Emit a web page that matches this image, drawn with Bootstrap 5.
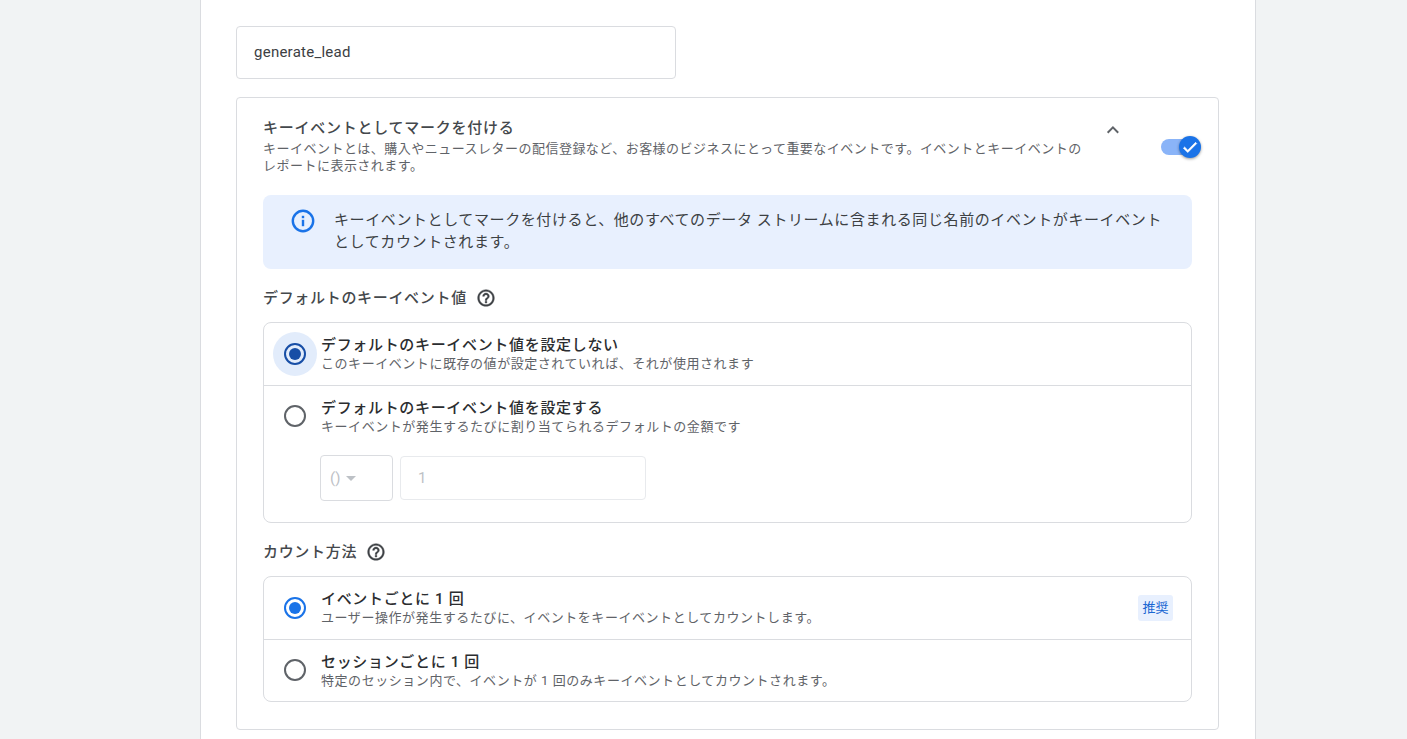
<!DOCTYPE html>
<html lang="ja">
<head>
    <meta charset="UTF-8">
    <meta name="viewport" content="width=device-width, initial-scale=1.0">
    <title>キーイベント</title>
    <link href="https://cdn.jsdelivr.net/npm/bootstrap@5.3.3/dist/css/bootstrap.min.css" rel="stylesheet">
    <style>
        html, body { height: 100%; overflow: hidden; }
        body {
            background: #f1f3f4;
            font-family: Roboto, "Noto Sans CJK JP", sans-serif;
            color: #3c4043;
        }
        .page-panel {
            width: 1056px;
            height: 739px;
            margin-left: 200px;
            padding: 26px 36px 0 35px;
            background: #fff;
            border-left: 1px solid #dadce0;
            border-right: 1px solid #dadce0;
        }
        .name-box {
            width: 440px;
            height: 53px;
            padding: 0 17px;
            border: 1px solid #dadce0;
            border-radius: 4px;
            font-size: 15px;
            letter-spacing: .25px;
            line-height: 51px;
            color: #3c4043;
        }
        .key-card {
            margin-top: 18px;
            height: 633px;
            padding: 20px 26px 0;
            border: 1px solid #dadce0;
            border-radius: 4px;
        }
        .key-head { height: 77px; }
        .key-head-text { width: 826px; }
        .key-title { font-size: 15px; letter-spacing: .75px; line-height: 20px; font-weight: 500; color: #44484c; }
        .key-desc { font-size: 13px; letter-spacing: .48px; line-height: 17px; color: #5f6368; margin-top: 2px; }
        .chev { margin: 0 0 0 17px; width: 24px; height: 24px; }
        .toggle-wrap { position: relative; width: 40px; height: 24px; margin-left: 36px; margin-right: -9px; margin-top: 16px; }
        .toggle-track { position: absolute; left: 0; top: 5px; width: 34px; height: 16px; border-radius: 8px; background: #8ab4f8; }
        .toggle-knob {
            position: absolute; left: 18px; top: 2px; width: 22px; height: 22px; border-radius: 50%;
            background: #1a73e8; box-shadow: 0 1px 3px rgba(0,0,0,.4);
        }
        .info-box {
            height: 74px;
            padding: 14px 28px 0 28px;
            background: #e8f0fe;
            border-radius: 8px;
            font-size: 15px;
            letter-spacing: .6px;
            line-height: 22px;
            color: #3c4043;
        }
        .info-text { margin-left: 19px; }
        .sect-label { font-size: 15px; letter-spacing: .68px; line-height: 20px; font-weight: 500; color: #44484c; }
        .label-one { margin-top: 19px; height: 20px; }
        .label-two { margin-top: 19px; height: 20px; }
        .opt-box { border: 1px solid #dadce0; border-radius: 8px; margin-top: 14px; }
        .opt-row { position: relative; height: 62px; padding-left: 57px; padding-top: 12px; }
        .opt-row + .opt-row { border-top: 1px solid #dadce0; }
        .opt-row + .opt-row .radio-mark { top: 19px; }
        .opt-row.opt-tall { height: 137px; }
        .opt-title { font-size: 15px; letter-spacing: .67px; line-height: 20px; font-weight: 500; color: #2b2d30; }
        .opt-sub { font-size: 13px; letter-spacing: .55px; line-height: 16px; color: #5f6368; margin-top: 1px; }
        .radio-halo { position: absolute; left: 9px; top: 9px; width: 44px; height: 44px; border-radius: 50%; background: #e2ecfb; }
        .radio-mark { position: absolute; left: 20px; top: 20px; width: 22px; height: 22px; border-radius: 50%; border: 2px solid #5f6368; }
        .radio-on { border-color: #1a73e8; }
        .radio-on::after { content: ""; position: absolute; left: 3px; top: 3px; width: 12px; height: 12px; border-radius: 50%; background: #1a73e8; }
        .radio-dark { border-color: #174ea6; }
        .radio-dark::after { background: #174ea6; }
        .value-inputs { margin-top: 20px; margin-left: -1px; gap: 7px; color: #bdc1c6; font-size: 15px; }
        .cur-box { width: 73px; height: 46px; border: 1px solid #dadce0; border-radius: 4px; padding-left: 9px; }
        .cur-caret { width: 0; height: 0; margin-left: 6px; border-left: 5px solid transparent; border-right: 5px solid transparent; border-top: 5px solid #bdc1c6; }
        .amt-box { width: 246px; height: 44px; border: 1px solid #e8eaed; border-radius: 4px; padding-left: 17px; }
        .rec-tag {
            position: absolute; right: 18px; top: 18px; width: 35px; height: 26px;
            background: #e8f0fe; border-radius: 3px; color: #1967d2;
            font-size: 13px; line-height: 26px; text-align: center;
        }
        .help-icon { fill: #3c4043; stroke: #3c4043; stroke-width: .5; margin-left: 1px; }
    </style>
</head>
<body>
    <div class="page-panel">
        <div class="name-box">generate_lead</div>
        <div class="key-card">
            <div class="key-head d-flex align-items-start">
                <div class="key-head-text">
                    <div class="key-title">キーイベントとしてマークを付ける</div>
                    <div class="key-desc">キーイベントとは、購入やニュースレターの配信登録など、お客様のビジネスにとって重要なイベントです。イベントとキーイベントのレポートに表示されます。</div>
                </div>
                <svg class="chev" viewBox="0 0 24 24" fill="#5f6368"><path d="M12 8l-6 6 1.41 1.41L12 10.83l4.59 4.58L18 14z"/></svg>
                <div class="toggle-wrap">
                    <div class="toggle-track"></div>
                    <div class="toggle-knob d-flex align-items-center justify-content-center">
                        <svg width="18" height="18" viewBox="0 0 24 24" fill="#fff" stroke="#fff" stroke-width=".8"><path d="M9 16.2L4.8 12l-1.6 1.6L9 19.4 21 7.4 19.4 5.8z"/></svg>
                    </div>
                </div>
            </div>
            <div class="info-box d-flex align-items-start">
                <svg class="flex-shrink-0" width="24" height="24" viewBox="0 0 24 24"><circle cx="12" cy="12" r="10.2" fill="none" stroke="#1a73e8" stroke-width="2.4"/><rect x="10.8" y="10.8" width="2.4" height="6.4" fill="#1a73e8"/><rect x="10.8" y="6.8" width="2.4" height="2.4" fill="#1a73e8"/></svg>
                <div class="info-text">キーイベントとしてマークを付けると、他のすべてのデータ ストリームに含まれる同じ名前のイベントがキーイベントとしてカウントされます。</div>
            </div>
            <div class="sect-label label-one d-flex align-items-center gap-2">デフォルトのキーイベント値
                <svg class="help-icon" width="20" height="20" viewBox="0 0 24 24"><path d="M11 18h2v-2h-2v2zm1-16C6.48 2 2 6.48 2 12s4.48 10 10 10 10-4.48 10-10S17.52 2 12 2zm0 18c-4.41 0-8-3.59-8-8s3.59-8 8-8 8 3.59 8 8-3.59 8-8 8zm0-14c-2.21 0-4 1.79-4 4h2c0-1.1.9-2 2-2s2 .9 2 2c0 2-3 1.75-3 5h2c0-2.25 3-2.5 3-5 0-2.21-1.79-4-4-4z"/></svg>
            </div>
            <div class="opt-box">
                <div class="opt-row">
                    <div class="radio-halo"></div>
                    <div class="radio-mark radio-on radio-dark"></div>
                    <div class="opt-title">デフォルトのキーイベント値を設定しない</div>
                    <div class="opt-sub">このキーイベントに既存の値が設定されていれば、それが使用されます</div>
                </div>
                <div class="opt-row opt-tall">
                    <div class="radio-mark"></div>
                    <div class="opt-title">デフォルトのキーイベント値を設定する</div>
                    <div class="opt-sub">キーイベントが発生するたびに割り当てられるデフォルトの金額です</div>
                    <div class="value-inputs d-flex align-items-center">
                        <div class="cur-box d-flex align-items-center">()<span class="cur-caret"></span></div>
                        <div class="amt-box d-flex align-items-center">1</div>
                    </div>
                </div>
            </div>
            <div class="sect-label label-two d-flex align-items-center gap-2">カウント方法
                <svg class="help-icon" width="20" height="20" viewBox="0 0 24 24"><path d="M11 18h2v-2h-2v2zm1-16C6.48 2 2 6.48 2 12s4.48 10 10 10 10-4.48 10-10S17.52 2 12 2zm0 18c-4.41 0-8-3.59-8-8s3.59-8 8-8 8 3.59 8 8-3.59 8-8 8zm0-14c-2.21 0-4 1.79-4 4h2c0-1.1.9-2 2-2s2 .9 2 2c0 2-3 1.75-3 5h2c0-2.25 3-2.5 3-5 0-2.21-1.79-4-4-4z"/></svg>
            </div>
            <div class="opt-box">
                <div class="opt-row">
                    <div class="radio-mark radio-on"></div>
                    <div class="opt-title">イベントごとに 1 回</div>
                    <div class="opt-sub">ユーザー操作が発生するたびに、イベントをキーイベントとしてカウントします。</div>
                    <div class="rec-tag">推奨</div>
                </div>
                <div class="opt-row">
                    <div class="radio-mark"></div>
                    <div class="opt-title">セッションごとに 1 回</div>
                    <div class="opt-sub">特定のセッション内で、イベントが 1 回のみキーイベントとしてカウントされます。</div>
                </div>
            </div>
        </div>
    </div>
    <script src="https://cdn.jsdelivr.net/npm/bootstrap@5.3.3/dist/js/bootstrap.bundle.min.js"></script>
</body>
</html>
